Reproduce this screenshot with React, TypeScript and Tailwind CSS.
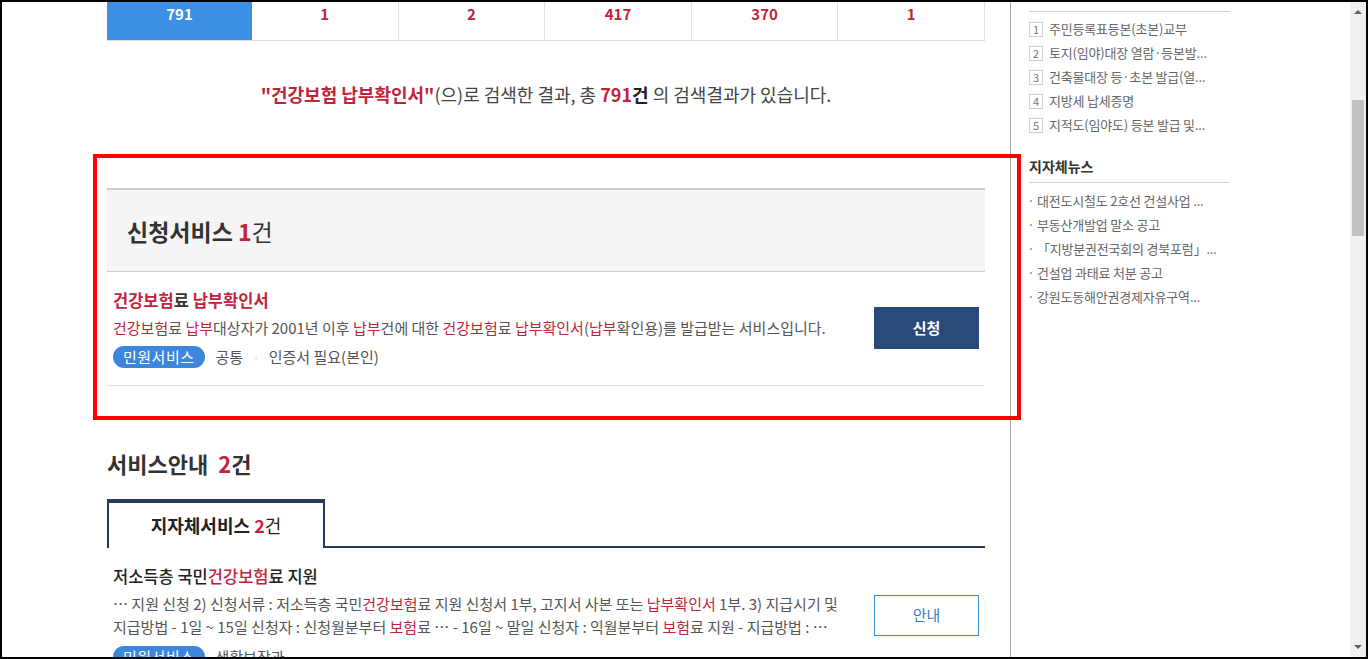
import React from "react";

const R = "text-[#c0243c]";

function Hl({ children }: { children: React.ReactNode }) {
  return <span className={R}>{children}</span>;
}

export default function App() {
  const counts = ["791", "1", "2", "417", "370", "1"];
  const popular = [
    "주민등록표등본(초본)교부",
    "토지(임야)대장 열람·등본발...",
    "건축물대장 등·초본 발급(열...",
    "지방세 납세증명",
    "지적도(임야도) 등본 발급 및...",
  ];
  const news = [
    "대전도시철도 2호선 건설사업 ...",
    "부동산개발업 말소 공고",
    "「지방분권전국회의 경북포럼」...",
    "건설업 과태료 처분 공고",
    "강원도동해안권경제자유구역...",
  ];
  return (
    <div
      className="relative w-[1368px] h-[659px] overflow-hidden border-2 border-black bg-white flex text-[#333]"
      style={{ fontFamily: '"Noto Sans CJK KR", "Noto Sans", sans-serif' }}
    >
      {/* main column */}
      <div className="w-[1009px] shrink-0 border-r border-[#a8a8a8] pl-[105px]">
        <div className="w-[878px]">
          {/* counts row */}
          <div className="flex h-[39px] border-b border-[#dcdcdc]">
            {counts.map((c, i) => (
              <div
                key={i}
                className={
                  i === 0
                    ? "w-[145px] bg-[#3b8fe5] text-white text-[15px] font-bold leading-[20px] pt-[2px] text-center"
                    : "w-[146.6px] border-r border-[#e2e2e2] text-[#c0243c] text-[15px] font-bold leading-[20px] pt-[2px] text-center"
                }
              >
                {c}
              </div>
            ))}
          </div>

          {/* summary */}
          <p className="mt-[40px] text-center text-[18px] leading-[26px] text-[#444]">
            <span className="font-bold text-[#c0243c]">"건강보험 납부확인서"</span>(으)로 검색한 결과, 총{" "}
            <span className="font-bold text-[#c0243c]">791</span>
            <span className="font-bold text-[#222]">건</span> 의 검색결과가 있습니다.
          </p>

          {/* 신청서비스 */}
          <div className="mt-[81px] border-t-2 border-b border-[#cccccc] bg-[#f5f5f5] h-[84px] flex items-center pl-[20px]">
            <h2 className="text-[23px] leading-[30px] font-bold text-[#333]">
              신청서비스 <span className="text-[#c0243c]">1</span>
              <span className="font-normal">건</span>
            </h2>
          </div>
          <div className="flex items-center justify-between border-b border-[#e0e0e0] px-[6px] pt-[16px] pb-[16px]">
            <div>
              <div className="text-[16.5px] leading-[24px] font-bold text-[#333]">
                <Hl>건강보험</Hl>료 <Hl>납부확인서</Hl>
              </div>
              <div className="mt-[4px] text-[15px] leading-[24px] text-[#555] whitespace-nowrap">
                <Hl>건강보험</Hl>료 <Hl>납부</Hl>대상자가 2001년 이후 <Hl>납부</Hl>건에 대한 <Hl>건강보험</Hl>료{" "}
                <Hl>납부확인서</Hl>(<Hl>납부</Hl>확인용)를 발급받는 서비스입니다.
              </div>
              <div className="mt-[6px] flex items-center text-[15px] text-[#555]">
                <span className="h-[22px] px-[10px] rounded-full bg-[#3c86dd] text-white leading-[22px] tracking-[0.5px]">
                  민원서비스
                </span>
                <span className="ml-[11px]">공통</span>
                <span className="mx-[10px] text-[#bbb] text-[10px]">·</span>
                <span>인증서 필요(본인)</span>
              </div>
            </div>
            <button className="w-[105px] h-[42px] bg-[#2b4a7c] text-white text-[15px] font-bold">신청</button>
          </div>

          {/* 서비스안내 */}
          <h2 className="mt-[62px] text-[22px] leading-[30px] font-bold text-[#333]">
            서비스안내 &nbsp;<span className="text-[#c0243c]">2</span>
            <span>건</span>
          </h2>
          <div className="mt-[21px] flex h-[49px]">
            <div className="w-[218px] border-t-4 border-x-2 border-[#253c5c] flex items-center justify-center text-[18px] font-bold text-[#222]">
              지자체서비스&nbsp;<span className="text-[#c0243c]">2</span>
              <span className="font-normal">건</span>
            </div>
            <div className="flex-1 border-b-2 border-[#253c5c]" />
          </div>
          <div className="flex items-start justify-between px-[6px] pt-[16px]">
            <div>
              <div className="text-[16.5px] leading-[24px] font-medium text-[#222]">
                저소득층 국민<Hl>건강보험</Hl>료 지원
              </div>
              <div className="mt-[4px] text-[15px] leading-[23px] text-[#555] whitespace-nowrap">
                … 지원 신청 2) 신청서류 : 저소득층 국민<Hl>건강보험</Hl>료 지원 신청서 1부, 고지서 사본 또는{" "}
                <Hl>납부확인서</Hl> 1부. 3) 지급시기 및
                <br />
                지급방법 - 1일 ~ 15일 신청자 : 신청월분부터 <Hl>보험</Hl>료 … - 16일 ~ 말일 신청자 : 익월분부터{" "}
                <Hl>보험</Hl>료 지원 - 지급방법 : …
              </div>
              <div className="mt-[8px] flex items-center text-[15px] text-[#555]">
                <span className="h-[22px] px-[10px] rounded-full bg-[#3c86dd] text-white leading-[22px] tracking-[0.5px]">
                  민원서비스
                </span>
                <span className="ml-[11px]">생활보장과</span>
              </div>
            </div>
            <button className="mt-[31px] w-[105px] h-[41px] border border-[#3a8bc8] bg-white text-[#2f7fc1] text-[15px]">
              안내
            </button>
          </div>
        </div>
      </div>

      {/* sidebar */}
      <div className="flex-1 pl-[18px]">
        <div className="w-[201px]">
          <div className="mt-[9px] border-t border-[#d0d0d0]" />
          <ul className="pt-[5px]">
            {popular.map((p, i) => (
              <li key={i} className="h-[24px] flex items-center text-[13px] text-[#666] tracking-[-0.2px] whitespace-nowrap">
                <span className="w-[14px] h-[15px] border border-[#cfcfcf] flex items-center justify-center text-[11px] text-[#777] tracking-normal">
                  {i + 1}
                </span>
                <span className="ml-[6px]">{p}</span>
              </li>
            ))}
          </ul>
          <div className="mt-[19px] pb-[6px] border-b border-[#d0d0d0] text-[14px] leading-[20px] font-bold text-[#333]">
            지자체뉴스
          </div>
          <ul className="mt-[6px]">
            {news.map((n, i) => (
              <li key={i} className="h-[24px] flex items-center text-[13px] text-[#666] tracking-[-0.2px] whitespace-nowrap">
                <span className="w-[2px] h-[2px] bg-[#aaa] ml-[1px]" />
                <span className="ml-[5px]">{n}</span>
              </li>
            ))}
          </ul>
        </div>
      </div>

      {/* scrollbar */}
      <div className="w-[16px] shrink-0 bg-[#f0f0f0] flex flex-col items-center">
        <svg width="8" height="5" viewBox="0 0 8 5" className="mt-[7px]">
          <path d="M0 5 L4 1 L8 5 Z" fill="#606060" />
        </svg>
        <div className="mt-[86px] w-[12px] h-[136px] bg-[#c1c1c1]" />
        <div className="flex-1" />
        <svg width="8" height="5" viewBox="0 0 8 5" className="mb-[7px]">
          <path d="M0 0 L4 4 L8 0 Z" fill="#606060" />
        </svg>
      </div>

      {/* red annotation box */}
      <div className="absolute left-[91px] top-[152px] w-[928px] h-[266px] border-4 border-[#ff0000] pointer-events-none" />
    </div>
  );
}
